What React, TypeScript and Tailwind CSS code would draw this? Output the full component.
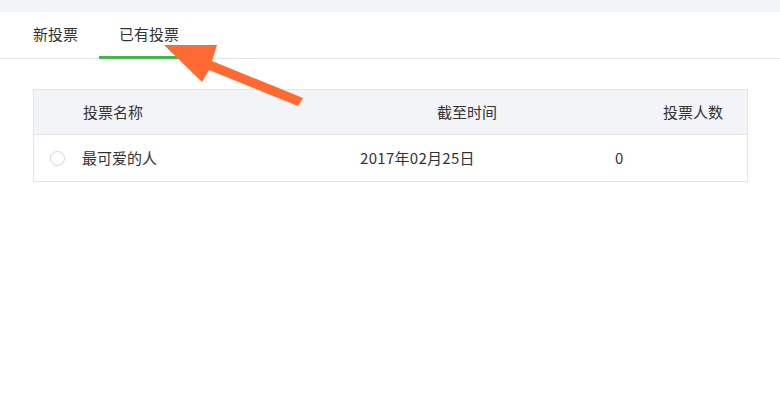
import React from 'react';

const font = { fontFamily: '"Noto Sans CJK SC", "Noto Sans", sans-serif' };

const Arrow: React.FC = () => (
  <svg className="pointer-events-none absolute left-0 top-0" width="780" height="413">
    <polygon
      points="164,45 217,45 212,61 303,98 298,106 209,70 202,82"
      fill="#ff6a33"
    />
  </svg>
);

const App: React.FC = () => {
  return (
    <div className="relative h-[413px] w-[780px] overflow-hidden bg-white text-[#333]" style={font}>
      <div className="h-3 bg-[#f3f4f7]" />

      <div className="flex h-[47px] border-b border-[#e5e6ea]">
        <div className="ml-[13px] flex items-center px-5 pb-[2px] text-[15px]">新投票</div>
        <div className="relative ml-px flex items-center px-5 pb-[2px] text-[15px]">
          已有投票
          <span className="absolute bottom-[-1px] left-0 right-0 h-[3px] bg-[#45b649]" />
        </div>
      </div>

      <div className="ml-[33px] mt-[30px] w-[715px] border border-[#e4e5e9] text-[15px]">
        <div className="flex h-[45px] items-center border-b border-[#e4e5e9] bg-[#f3f4f8] pl-[49px]">
          <div className="w-[354px]">投票名称</div>
          <div className="w-[226px]">截至时间</div>
          <div>投票人数</div>
        </div>
        <div className="flex h-[46px] items-center pl-4">
          <span className="h-[15px] w-[15px] rounded-full border border-[#d6d6d6] bg-white" />
          <div className="ml-[17px] w-[278px]">最可爱的人</div>
          <div className="w-[255px] tracking-[0.3px]">2017年02月25日</div>
          <div>0</div>
        </div>
      </div>

      <Arrow />
    </div>
  );
};

export default App;
